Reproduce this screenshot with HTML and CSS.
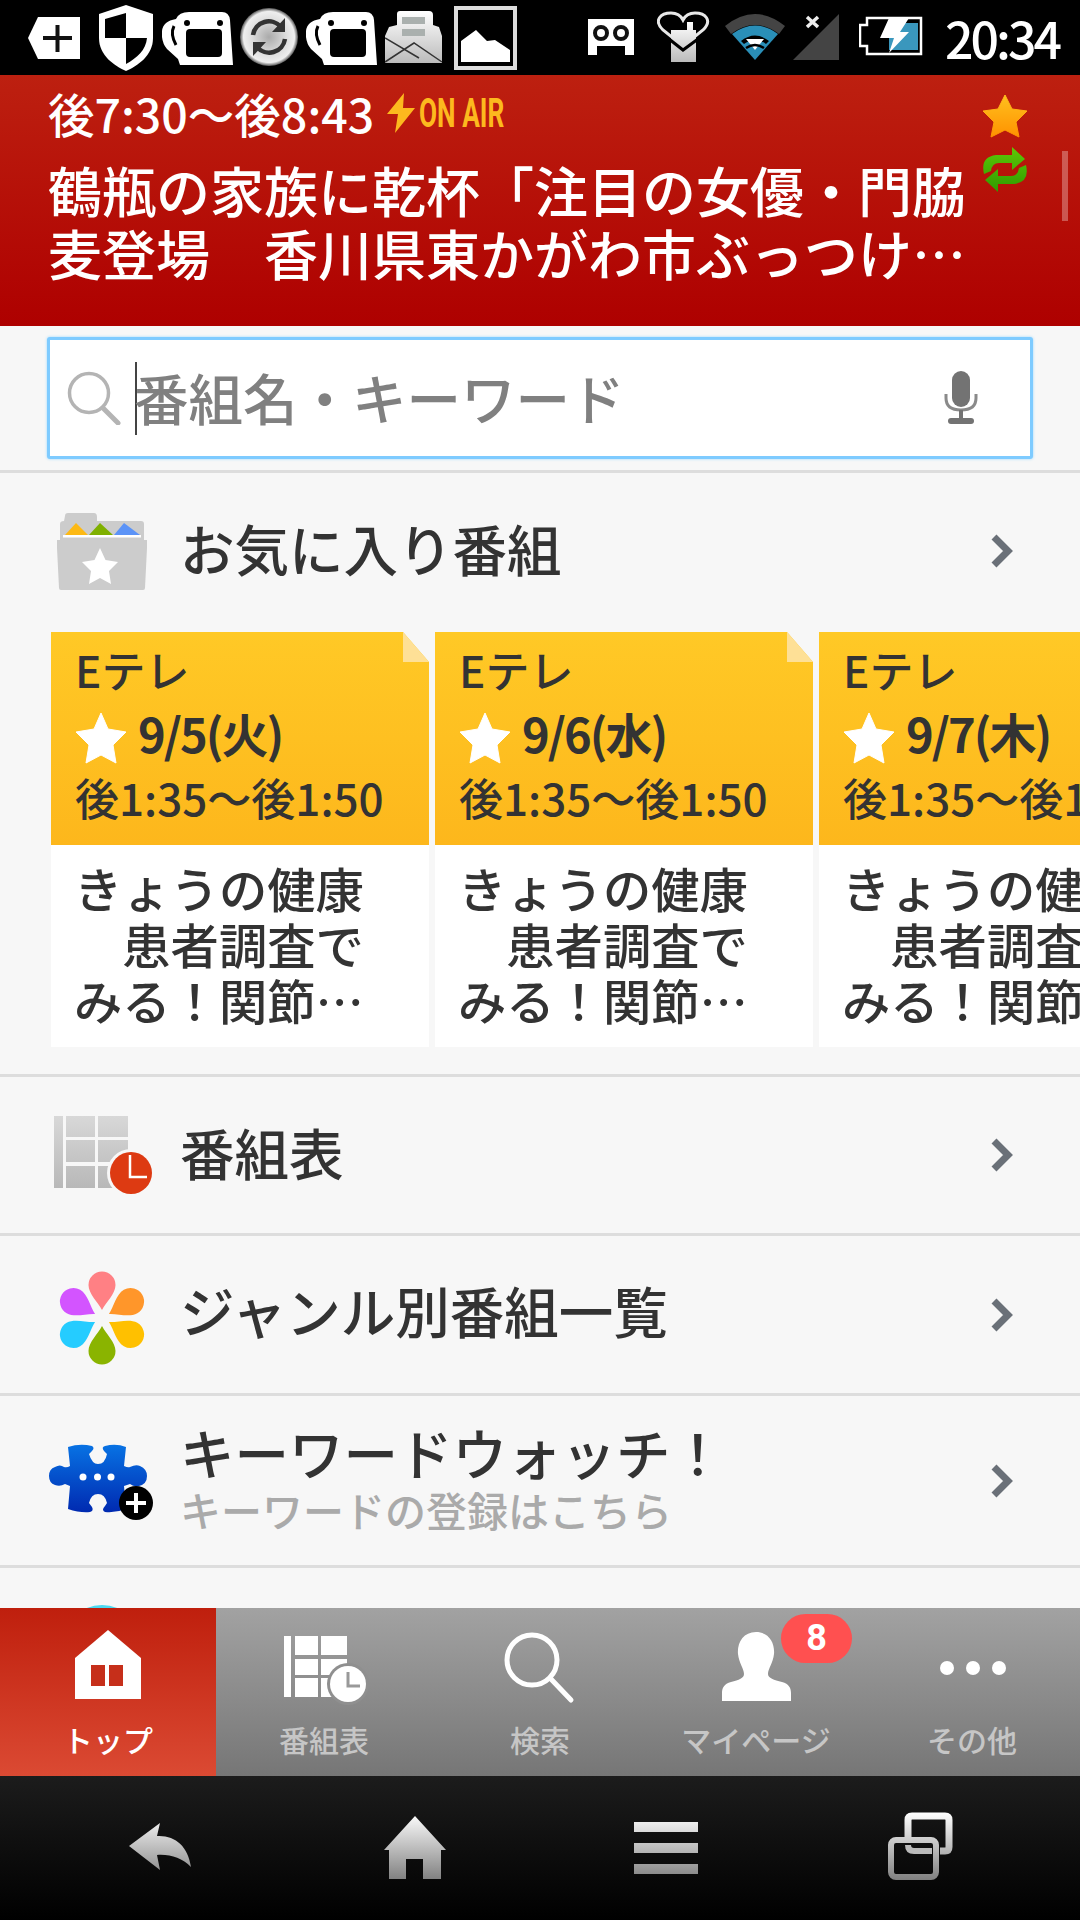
FILE: index.html
```html
<!DOCTYPE html>
<html lang="ja">
<head>
    <meta charset="UTF-8">
    <meta name="viewport" content="width=device-width, initial-scale=1.0">
    <title>番組表</title>
    <link rel="stylesheet" href="styles.css">
</head>
<body>
<div class="app">
    <!-- status bar -->
    <div class="status">
        <div class="status-group">
            <svg width="71" height="75" viewBox="0 0 71 75"><path d="M0 38 L10 17 H52 V59 H10 Z" fill="#fff"/><path d="M15 38 H44 M29.5 25 V52" stroke="#111" stroke-width="4"/></svg>
            <svg width="63" height="75" viewBox="0 0 63 75"><path d="M27 5 L54 14 V38 C54 56 38 66 27 71 C16 66 0 56 0 38 V14 Z" fill="#fff"/><path d="M27 13 L6 19 V38 H27 Z M27 38 H48 C47 50 38 58 27 64 Z" fill="#000"/></svg>
            <svg width="78" height="75" viewBox="0 0 78 75"><use href="#cup"/></svg>
            <svg width="66" height="75" viewBox="0 0 66 75"><defs><radialGradient id="syncfill"><stop offset="0" stop-color="#aaa"/><stop offset=".6" stop-color="#ddd"/><stop offset=".88" stop-color="#eee"/><stop offset="1" stop-color="#555"/></radialGradient></defs><circle cx="29" cy="37" r="29" fill="url(#syncfill)"/><path d="M13 35 A16 16 0 0 1 41 27 M45 39 A16 16 0 0 1 17 47" fill="none" stroke="#333" stroke-width="4.5"/><path d="M45 18 V32 H32 Z M13 56 V42 H26 Z" fill="#333"/></svg>
            <svg width="79" height="75" viewBox="0 0 79 75"><defs><symbol id="cup" viewBox="0 0 78 75" width="78" height="75"><path d="M14 19 Q17 12 27 12 H60 Q67 12 68 20 L71 65 H18 L16 59 L5 49 Q-1 42 0 31 Q1 21 14 19 Z" fill="#fff"/><path d="M12 26 Q8 34 14 45" fill="none" stroke="#000" stroke-width="3"/><rect x="24" y="29" width="36" height="28" rx="4" fill="#000"/><circle cx="25" cy="23" r="3" fill="#000"/><circle cx="58" cy="23" r="3" fill="#000"/></symbol></defs><use href="#cup"/></svg>
            <svg width="69" height="75" viewBox="0 0 69 75"><defs><linearGradient id="mailfill" x1="0" y1="0" x2="0" y2="1"><stop offset="0" stop-color="#fff"/><stop offset="1" stop-color="#bbb"/></linearGradient></defs><path d="M0 36 L4 27 L12 25 V14 Q12 11 15 11 H44 Q48 11 48 15 V25 L54 27 L57 36 V63 H0 Z" fill="url(#mailfill)"/><path d="M0 38 L34 58 M57 62 L29 43 L0 62" fill="none" stroke="#333" stroke-width="1.5"/><rect x="17" y="17" width="23" height="7" fill="#aab0ae"/><rect x="17" y="29" width="23" height="7" fill="#aab0ae"/></svg>
            <svg width="64" height="75" viewBox="0 0 64 75"><rect x="2" y="8" width="59" height="60" fill="none" stroke="#ddd" stroke-width="4"/><path d="M7 62 V41 L22 30 L33 41 L41 40 L56 50 V62 Z" fill="#fff"/></svg>
        </div>
        <div class="status-group">
            <svg width="69" height="75" viewBox="0 0 69 75"><path d="M0 19 H46 V55 H37 V46 H9 V55 H0 Z" fill="#fff"/><circle cx="13" cy="33" r="6" fill="none" stroke="#111" stroke-width="4"/><circle cx="33" cy="33" r="6" fill="none" stroke="#111" stroke-width="4"/></svg>
            <svg width="68" height="75" viewBox="0 0 68 75"><defs><linearGradient id="plugfill" x1="0" y1="0" x2="0" y2="1"><stop offset="0" stop-color="#fff"/><stop offset="1" stop-color="#bbb"/></linearGradient></defs><path d="M26 46 L6 30 C-4 20 4 13 14 13 C20 13 24 16 26 20 C28 16 32 13 38 13 C48 13 56 20 46 30 Z" fill="none" stroke="#e8e8e8" stroke-width="3"/><path d="M14 30 H30 V22 H36 V30 H39 V62 H14 Z" fill="url(#plugfill)"/><path d="M12 39 L26 50 L41 39" fill="none" stroke="#000" stroke-width="3"/></svg>
            <svg width="68" height="75" viewBox="0 0 68 75"><path d="M0 26 Q30 2 60 26 L54 34 Q30 16 6 34 Z" fill="#444"/><path d="M7 34 Q30 17 53 34 L30 60 Z" fill="#2a8fb8"/><path d="M16 41 Q30 30 44 41 L41 44 Q30 36 19 44 Z" fill="#000"/><path d="M21 39 H39 L30 50 Z" fill="#fff"/><path d="M21 48 Q30 42 39 48" fill="none" stroke="#000" stroke-width="2.5"/></svg>
            <svg width="66" height="75" viewBox="0 0 66 75"><path d="M46 14 V60 H0 Z" fill="#444"/><path d="M14 17 L25 27 M25 17 L14 27" stroke="#eee" stroke-width="3.5"/></svg>
            <svg width="86" height="75" viewBox="0 0 86 75"><path d="M8 25 V18 H62 V54 H8 V46 H1 V25 Z" fill="none" stroke="#fff" stroke-width="2.5"/><rect x="30" y="23" width="29" height="27" fill="#3a97bd"/><path d="M30 18 H50 L41 32 H50 L30 53 L35 38 H21 Z" fill="#fff"/></svg>
            <span class="status-time">20:34</span>
        </div>
    </div>

    <!-- now on air -->
    <header class="onair">
        <div class="onair-main">
            <div class="onair-time">
                <span>後7:30〜後8:43</span>
                <svg class="onair-bolt" width="28" height="40" viewBox="0 0 28 40"><path d="M17 0 L0 21 H11 L8 40 L28 15 H16 Z" fill="#fdb91e"/></svg>
                <span class="onair-label">ON AIR</span>
            </div>
            <div class="onair-title">鶴瓶の家族に乾杯「注目の女優・門脇<br>麦登場　香川県東かがわ市ぶっつけ…</div>
        </div>
        <div class="onair-side">
            <svg width="46" height="44" viewBox="0 0 46 44"><defs><linearGradient id="orange" x1="0" y1="0" x2="0" y2="1"><stop offset="0" stop-color="#ffc01e"/><stop offset="1" stop-color="#ff9200"/></linearGradient></defs><path d="M23 1 L30 15 L45 17 L34 28 L37 43 L23 36 L9 43 L12 28 L1 17 L16 15 Z" fill="url(#orange)" stroke="url(#orange)" stroke-linejoin="round" stroke-width="1"/></svg>
            <svg width="46" height="46" viewBox="0 0 46 46"><defs><linearGradient id="green" x1="0" y1="0" x2="0" y2="1"><stop offset="0" stop-color="#5ec806"/><stop offset="1" stop-color="#2f9a00"/></linearGradient></defs><path d="M30 0 L43 12 L30 23 V16 H17 Q10 16 9 24 L2 27 Q-2 10 14 8 H30 Z M16 45 L3 33 L16 22 V29 H29 Q36 29 37 21 L44 18 Q48 35 32 37 H16 Z" fill="url(#green)"/></svg>
        </div>
        <div class="onair-scroll"></div>
    </header>

    <main class="content">
        <div class="search-wrap">
            <div class="search">
                <svg width="54" height="54" viewBox="0 0 54 54"><circle cx="22" cy="22" r="19.5" fill="none" stroke="#b4b4b4" stroke-width="3.5"/><path d="M36 37 L51 52" stroke="#b4b4b4" stroke-width="5" stroke-linecap="round"/></svg>
                <span class="search-caret"></span>
                <span class="search-text">番組名・キーワード</span>
                <svg class="search-mic" width="34" height="54" viewBox="0 0 34 54"><rect x="8" y="0" width="18" height="36" rx="9" fill="#737373"/><path d="M2 23 V27 Q2 39 17 39 Q32 39 32 27 V23" fill="none" stroke="#8a8a8a" stroke-width="3"/><path d="M17 39 V49" stroke="#737373" stroke-width="4"/><rect x="4" y="47" width="26" height="6" rx="3" fill="#737373"/></svg>
            </div>
        </div>

        <section class="row row-fav">
            <div class="row-head">
                <svg class="row-icon" width="110" height="100" viewBox="0 0 110 100"><path d="M17 15 Q17 12 20 12 H46 Q49 12 49 16 V20 H93 Q96 20 96 23 V40 H12 V23 Q12 20 16 20 Z" fill="#ccc"/><path d="M17 34 L28 22 L40 34 Z" fill="#fdb914"/><path d="M41 34 L52 22 L65 34 Z" fill="#7fb000"/><path d="M66 34 L76 22 L92 34 Z" fill="#5b93f7"/><rect x="15" y="34" width="78" height="2.5" fill="#fff"/><path d="M9 39 H99 V47 L97 87 Q97 89 95 89 H13 Q11 89 11 87 L9 47 Z" fill="#ccc"/><path d="M52 47 L57.500 59 L70 61 L61 70 L63 83 L52 77 L41 83 L43 70 L34 61 L46.500 59 Z" fill="#fff"/></svg>
                <span class="row-title">お気に入り番組</span>
                <svg class="chevron" width="23" height="34" viewBox="0 0 23 34"><path d="M4 3 L18 17 L4 31" fill="none" stroke="#6a7078" stroke-width="7"/></svg>
            </div>
            <div class="cards">
                <article class="card">
                    <div class="card-top">
                        <svg class="card-fold" width="26" height="30" viewBox="0 0 26 30"><path d="M0 0 H26 V30 Z" fill="#f7f7f7"/><path d="M0 0 L26 30 H0 Z" fill="#fee096"/></svg>
                        <div class="card-channel">Eテレ</div>
                        <div class="card-date"><svg width="52" height="52" viewBox="0 0 52 52"><path d="M26 1 L33 17 L51 20 L38 33 L41 51 L26 43 L11 51 L14 33 L1 20 L19 17 Z" fill="#fff" stroke="#fff" stroke-linejoin="round"/></svg><span>9/5(火)</span></div>
                        <div class="card-time">後1:35〜後1:50</div>
                    </div>
                    <div class="card-body">きょうの健康<br>　患者調査で<br>みる！関節…</div>
                </article>
                <article class="card">
                    <div class="card-top">
                        <svg class="card-fold" width="26" height="30" viewBox="0 0 26 30"><path d="M0 0 H26 V30 Z" fill="#f7f7f7"/><path d="M0 0 L26 30 H0 Z" fill="#fee096"/></svg>
                        <div class="card-channel">Eテレ</div>
                        <div class="card-date"><svg width="52" height="52" viewBox="0 0 52 52"><path d="M26 1 L33 17 L51 20 L38 33 L41 51 L26 43 L11 51 L14 33 L1 20 L19 17 Z" fill="#fff" stroke="#fff" stroke-linejoin="round"/></svg><span>9/6(水)</span></div>
                        <div class="card-time">後1:35〜後1:50</div>
                    </div>
                    <div class="card-body">きょうの健康<br>　患者調査で<br>みる！関節…</div>
                </article>
                <article class="card">
                    <div class="card-top">
                        <svg class="card-fold" width="26" height="30" viewBox="0 0 26 30"><path d="M0 0 H26 V30 Z" fill="#f7f7f7"/><path d="M0 0 L26 30 H0 Z" fill="#fee096"/></svg>
                        <div class="card-channel">Eテレ</div>
                        <div class="card-date"><svg width="52" height="52" viewBox="0 0 52 52"><path d="M26 1 L33 17 L51 20 L38 33 L41 51 L26 43 L11 51 L14 33 L1 20 L19 17 Z" fill="#fff" stroke="#fff" stroke-linejoin="round"/></svg><span>9/7(木)</span></div>
                        <div class="card-time">後1:35〜後1:50</div>
                    </div>
                    <div class="card-body">きょうの健康<br>　患者調査で<br>みる！関節…</div>
                </article>
            </div>
        </section>

        <section class="row row-link row-table">
            <svg class="row-icon" width="110" height="100" viewBox="0 0 110 100"><defs><linearGradient id="grid" gradientUnits="userSpaceOnUse" x1="0" y1="11" x2="0" y2="83"><stop offset="0" stop-color="#d8d8d8"/><stop offset="1" stop-color="#b8b8b8"/></linearGradient></defs><path d="M6 11 H15 V83 H6 Z M18 11 H47 V32 H18 Z M50 11 H80 V32 H50 Z M18 35 H47 V57 H18 Z M50 35 H80 V57 H50 Z M18 61 H47 V83 H18 Z M50 61 H80 V83 H50 Z" fill="url(#grid)"/><circle cx="83" cy="68" r="24" fill="#f7f7f7"/><circle cx="83" cy="68" r="21" fill="#dd3a12"/><path d="M82 50 V72 H99" fill="none" stroke="#fff" stroke-width="2.500"/></svg>
            <span class="row-title">番組表</span>
            <svg class="chevron" width="23" height="34" viewBox="0 0 23 34"><path d="M4 3 L18 17 L4 31" fill="none" stroke="#6a7078" stroke-width="7"/></svg>
        </section>

        <section class="row row-link row-genre">
            <svg class="row-icon" width="110" height="100" viewBox="0 0 110 100"><defs><path id="petal" d="M0 -8 C-4 -16 -13.500 -24 -13.500 -33 A13.500 13.500 0 1 1 13.500 -33 C13.500 -24 4 -16 0 -8 Z"/></defs><g transform="translate(54 53)"><use href="#petal" fill="#ff8084"/><use href="#petal" fill="#ff962a" transform="rotate(60)"/><use href="#petal" fill="#ffc000" transform="rotate(120)"/><use href="#petal" fill="#8ab400" transform="rotate(180)"/><use href="#petal" fill="#25ccff" transform="rotate(240)"/><use href="#petal" fill="#d354ff" transform="rotate(300)"/></g></svg>
            <span class="row-title">ジャンル別番組一覧</span>
            <svg class="chevron" width="23" height="34" viewBox="0 0 23 34"><path d="M4 3 L18 17 L4 31" fill="none" stroke="#6a7078" stroke-width="7"/></svg>
        </section>

        <section class="row row-link row-keyword">
            <svg class="row-icon" width="110" height="100" viewBox="0 0 110 100"><defs><linearGradient id="puzzle" gradientUnits="userSpaceOnUse" x1="0" y1="13" x2="0" y2="82"><stop offset="0" stop-color="#0873e4"/><stop offset="1" stop-color="#0029b0"/></linearGradient></defs><path d="M20 16 Q32 12 44 15 Q47 17 44 20 L41 23 Q44 33 50 33 Q57 33 59 23 L56 20 Q53 16 57 15 Q68 12 78 16 L76 35 Q80 37 82 36 Q88 33 92 35 Q99 38 99 45 Q99 53 91 55 Q86 56 82 53 L76 55 L78 78 Q68 82 57 81 Q53 79 57 75 L59 72 Q57 63 50 63 Q43 63 41 72 L44 76 Q46 80 42 81 Q32 82 20 78 L22 55 L17 53 Q12 56 7 54 Q1 52 1 45 Q1 38 7 36 Q12 33 16 36 Q19 37 22 35 Z" fill="url(#puzzle)"/><circle cx="35" cy="46" r="3.500" fill="#fff"/><circle cx="49.500" cy="46" r="3.500" fill="#fff"/><circle cx="63" cy="46" r="3.500" fill="#fff"/><circle cx="88" cy="72" r="17" fill="#000"/><path d="M78 72 H98 M88 62 V82" stroke="#fff" stroke-width="4"/></svg>
            <div class="row-text">
                <span class="row-title">キーワードウォッチ！</span>
                <span class="row-sub">キーワードの登録はこちら</span>
            </div>
            <svg class="chevron" width="23" height="34" viewBox="0 0 23 34"><path d="M4 3 L18 17 L4 31" fill="none" stroke="#6a7078" stroke-width="7"/></svg>
        </section>

        <section class="row row-link">
            <svg class="row-icon" width="110" height="100" viewBox="0 0 110 100"><circle cx="54" cy="50" r="40" fill="#4cd8f0"/></svg>
        </section>
    </main>

    <!-- tabs -->
    <nav class="tabs">
        <div class="tab tab-active">
            <svg width="100" height="80" viewBox="0 0 100 80"><path d="M50 4 L83 32 V73 H17 V32 Z" fill="#fff"/><path d="M33 39 H47 V60 H33 Z M51 39 H65 V60 H51 Z" fill="#c62f1a"/></svg>
            <span>トップ</span>
        </div>
        <div class="tab">
            <svg width="100" height="80" viewBox="0 0 100 80"><path d="M10 10 H17 V71 H10 Z M21 10 H44 V29 H21 Z M47 10 H73 V29 H47 Z M21 33 H44 V49 H21 Z M47 33 H73 V49 H47 Z M21 52 H44 V71 H21 Z M47 52 H73 V71 H47 Z" fill="#fff"/><circle cx="74" cy="58" r="21" fill="#8f8f8f"/><circle cx="74" cy="58" r="18" fill="#fff"/><path d="M74 46 V60 H86" fill="none" stroke="#999" stroke-width="3"/></svg>
            <span>番組表</span>
        </div>
        <div class="tab">
            <svg width="100" height="80" viewBox="0 0 100 80"><circle cx="42" cy="34" r="25" fill="none" stroke="#fff" stroke-width="5"/><path d="M60 52 L81 74" stroke="#fff" stroke-width="5" stroke-linecap="round"/></svg>
            <span>検索</span>
        </div>
        <div class="tab">
            <svg width="100" height="80" viewBox="0 0 100 80"><path d="M50 6 C63 6 69 17 68 28 C67 37 62 43 62 48 C62 52 68 54 76 56 C83 58 85 62 85 67 V75 H16 V67 C16 62 18 58 25 56 C33 54 38 52 38 48 C38 43 33 37 32 28 C31 17 37 6 50 6 Z" fill="#fff"/></svg>
            <span>マイページ</span>
            <b class="tab-badge">8</b>
        </div>
        <div class="tab">
            <svg width="100" height="80" viewBox="0 0 100 80"><circle cx="25" cy="42" r="7" fill="#fff"/><circle cx="51" cy="42" r="7" fill="#fff"/><circle cx="77" cy="42" r="7" fill="#fff"/></svg>
            <span>その他</span>
        </div>
    </nav>

    <!-- android keys -->
    <div class="keys">
        <svg width="0" height="0" class="keys-defs"><defs><linearGradient id="keyfill" gradientUnits="userSpaceOnUse" x1="0" y1="5" x2="0" y2="72"><stop offset="0" stop-color="#fff"/><stop offset="1" stop-color="#808080"/></linearGradient></defs></svg>
        <div class="key"><svg width="80" height="80" viewBox="0 0 80 80"><path d="M9 38 L40 15 L37 28 C55 27 68 38 71 59 C62 50 50 46 37 47 L40 62 Z" fill="url(#keyfill)"/></svg></div>
        <div class="key"><svg width="80" height="80" viewBox="0 0 80 80"><path d="M41 8 L72 42 H67 V71 H49 V51 H32 V71 H15 V42 H10 Z" fill="url(#keyfill)"/></svg></div>
        <div class="key"><svg width="80" height="80" viewBox="0 0 80 80"><path d="M6 14 H70 V24 H6 Z M6 35 H70 V45 H6 Z M6 56 H70 V66 H6 Z" fill="url(#keyfill)"/></svg></div>
        <div class="key"><svg width="80" height="80" viewBox="0 0 80 80"><path d="M26 29 V12 Q26 8 30 8 H63 Q67 8 67 12 V39 Q67 43 63 43 H58" fill="none" stroke="url(#keyfill)" stroke-width="7"/><path d="M26 37 Q26 43 32 43 H50" fill="none" stroke="#bbb" stroke-width="6"/><rect x="9" y="32" width="45" height="37" rx="5" fill="none" stroke="url(#keyfill)" stroke-width="6"/></svg></div>
    </div>
</div>
</body>
</html>
```

FILE: styles.css
```css
html, body {
    margin: 0;
    padding: 0;
    height: 100%;
    overflow: hidden;
}
body {
    font-family: "Noto Sans CJK JP", "Noto Sans", sans-serif;
    font-weight: 500;
    color: #333;
}
svg {
    display: block;
    flex: none;
}
.app {
    width: 1080px;
    height: 1920px;
    display: flex;
    flex-direction: column;
    overflow: hidden;
}

/* status bar */
.status {
    height: 75px;
    flex: none;
    background: #000;
    display: flex;
    justify-content: space-between;
    padding-left: 28px;
}
.status-group {
    display: flex;
    align-items: center;
}
.status-time {
    width: 119px;
    margin-right: 16px;
    color: #fff;
    font-size: 50px;
    line-height: 75px;
    letter-spacing: -3px;
    white-space: nowrap;
}

/* on air */
.onair {
    position: relative;
    height: 251px;
    flex: none;
    box-sizing: border-box;
    padding: 8px 0 0 48px;
    background: linear-gradient(#bd2010, #ae0000);
    color: #fff;
    display: flex;
}
.onair-main {
    width: 934px;
}
.onair-time {
    display: flex;
    align-items: center;
    height: 60px;
    font-size: 46.500px;
    line-height: 60px;
    white-space: nowrap;
}
.onair-bolt {
    margin-left: 13px;
}
.onair-label {
    display: inline-block;
    margin-left: 4px;
    color: #fdb91e;
    font-family: Roboto, sans-serif;
    font-weight: 700;
    font-size: 41px;
    transform: scaleX(0.64);
    transform-origin: left center;
}
.onair-title {
    margin-top: 15px;
    font-size: 54px;
    line-height: 63px;
    white-space: nowrap;
}
.onair-side {
    padding-top: 11px;
    display: flex;
    flex-direction: column;
    gap: 9px;
}
.onair-scroll {
    position: absolute;
    left: 1062px;
    top: 76px;
    width: 6px;
    height: 70px;
    background: rgba(255, 255, 255, 0.3);
}

/* main list */
.content {
    flex: 1;
    min-height: 0;
    overflow: hidden;
    background: #f7f7f7;
}
.search-wrap {
    box-sizing: border-box;
    height: 147px;
    padding: 11px 47px 0;
    border-bottom: 3px solid #ddd;
}
.search {
    height: 122px;
    box-sizing: border-box;
    border: 3px solid #7ecbff;
    border-radius: 3px;
    box-shadow: 0 0 3px #9ad8ff;
    background: #fff;
    display: flex;
    align-items: center;
    padding: 0 52px 0 17px;
}
.search-caret {
    width: 2px;
    height: 73px;
    margin-left: 14px;
    background: #444;
}
.search-text {
    margin-left: -3px;
    margin-bottom: 4px;
    font-size: 54.500px;
    color: #808080;
    white-space: nowrap;
}
.search-mic {
    margin-left: auto;
}

.row {
    border-bottom: 3px solid #ddd;
    box-sizing: border-box;
}
.row-icon {
    margin-left: 48px;
    margin-right: 22px;
}
.row-title {
    margin-bottom: 6px;
    font-size: 54.500px;
    line-height: 60px;
    color: #333;
    white-space: nowrap;
}
.row-genre .row-title {
    margin-bottom: 10px;
}
.row-sub {
    display: block;
    font-size: 41px;
    line-height: 48px;
    color: #aaa;
    white-space: nowrap;
}
.row-text {
    margin-bottom: 6px;
}
.row-text .row-title {
    display: block;
    margin-bottom: 3px;
}
.chevron {
    margin-left: auto;
    margin-right: 67px;
}
.row-link {
    display: flex;
    align-items: center;
    height: 157px;
}
.row-table {
    height: 159px;
}
.row-genre {
    height: 160px;
}
.row-keyword {
    height: 172px;
}

/* favourites */
.row-fav {
    height: 604px;
}
.row-head {
    display: flex;
    align-items: center;
    height: 156px;
    margin-bottom: 3px;
}
.row-head .row-title {
    margin-bottom: 7px;
}
.cards {
    display: flex;
    gap: 6px;
    padding-left: 51px;
}
.card {
    width: 378px;
    flex: none;
    background: #fff;
}
.card-top {
    position: relative;
    height: 213px;
    box-sizing: border-box;
    padding: 7px 0 0 24px;
    background: linear-gradient(#ffc926, #fdb71c);
}
.card-fold {
    position: absolute;
    right: 0;
    top: 0;
}
.card-channel {
    font-size: 44px;
    line-height: 60px;
}
.card-date {
    display: flex;
    align-items: center;
    height: 67px;
    font-size: 47px;
    line-height: 67px;
    font-weight: 700;
    letter-spacing: -2px;
    gap: 11px;
}
.card-date svg {
    margin-top: 10px;
}
.card-time {
    font-size: 44px;
    line-height: 62px;
    white-space: nowrap;
}
.card-body {
    height: 202px;
    box-sizing: border-box;
    padding: 14px 0 0 23px;
    font-size: 48.300px;
    line-height: 56px;
    white-space: nowrap;
    overflow: hidden;
}

/* tab bar */
.tabs {
    height: 168px;
    flex: none;
    display: flex;
    background: linear-gradient(#a2a2a2, #767676);
}
.tab {
    position: relative;
    width: 216px;
    box-sizing: border-box;
    padding-top: 18px;
    display: flex;
    flex-direction: column;
    align-items: center;
    color: #c6c6c6;
    font-size: 30px;
    line-height: 40px;
    white-space: nowrap;
}
.tab span {
    margin-top: 13px;
}
.tab-active {
    background: linear-gradient(#bf1f0d, #db4a33);
    color: #fff;
}
.tab-badge {
    position: absolute;
    left: 133px;
    top: 6px;
    width: 71px;
    height: 49px;
    border-radius: 25px;
    background: #ff5050;
    color: #fff;
    font-family: Roboto, sans-serif;
    font-size: 36px;
    line-height: 49px;
    text-align: center;
}

/* android keys */
.keys {
    height: 144px;
    flex: none;
    display: flex;
    align-items: center;
    padding-left: 33px;
    background: linear-gradient(#1c1c1c, #000);
}
.keys-defs {
    position: absolute;
}
.key {
    width: 254px;
    display: flex;
    justify-content: center;
}
```
